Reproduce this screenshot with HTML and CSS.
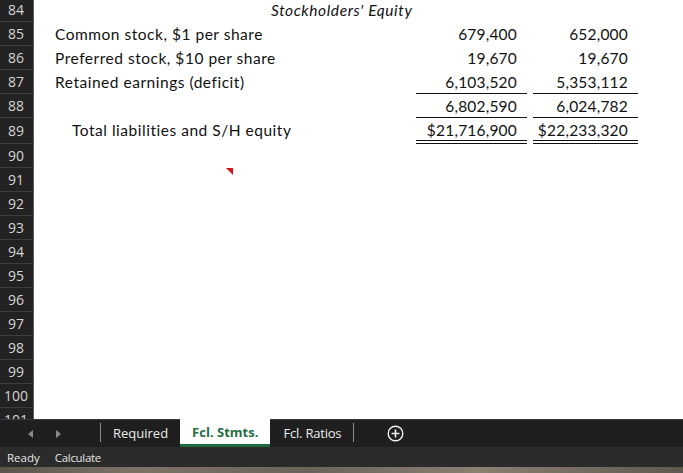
FILE: index.html
```html
<!DOCTYPE html>
<html>
<head>
<meta charset="utf-8">
<link rel="stylesheet" href="styles.css">
</head>
<body>
<div class="app">
  <div class="sheet">
    <div class="row r84"><div class="hdr">84</div><div class="c label title">Stockholders' Equity</div></div>
    <div class="row"><div class="hdr">85</div><div class="c label">Common stock, $1 per share</div><div class="c num n1">679,400</div><div class="c num n2">652,000</div></div>
    <div class="row"><div class="hdr">86</div><div class="c label">Preferred stock, $10 per share</div><div class="c num n1">19,670</div><div class="c num n2">19,670</div></div>
    <div class="row"><div class="hdr">87</div><div class="c label">Retained earnings (deficit)</div><div class="c num n1 single">6,103,520</div><div class="c num n2 single">5,353,112</div></div>
    <div class="row"><div class="hdr">88</div><div class="c label"></div><div class="c num n1 single">6,802,590</div><div class="c num n2 single">6,024,782</div></div>
    <div class="row r89"><div class="hdr">89</div><div class="c label indent">Total liabilities and S/H equity</div><div class="c num n1 double">$21,716,900</div><div class="c num n2 double">$22,233,320</div></div>
    <div class="row"><div class="hdr">90</div></div>
    <div class="row"><div class="hdr">91</div><div class="c label marked"><span class="comment"></span></div></div>
    <div class="row"><div class="hdr">92</div></div>
    <div class="row"><div class="hdr">93</div></div>
    <div class="row"><div class="hdr">94</div></div>
    <div class="row"><div class="hdr">95</div></div>
    <div class="row"><div class="hdr">96</div></div>
    <div class="row"><div class="hdr">97</div></div>
    <div class="row"><div class="hdr">98</div></div>
    <div class="row"><div class="hdr">99</div></div>
    <div class="row"><div class="hdr">100</div></div>
    <div class="row"><div class="hdr">101</div></div>
  </div>
  <div class="tabbar">
    <div class="navs">
      <svg class="arrow" width="5" height="8" viewBox="0 0 5 8"><path d="M5 0 L0 4 L5 8 Z" fill="#8a8a8a"/></svg>
      <svg class="arrow" width="5" height="8" viewBox="0 0 5 8"><path d="M0 0 L5 4 L0 8 Z" fill="#8a8a8a"/></svg>
    </div>
    <div class="sep"></div>
    <div class="tab">Required</div>
    <div class="tab active">Fcl. Stmts.</div>
    <div class="tab last">Fcl. Ratios</div>
    <div class="sep"></div>
    <svg class="add" width="17" height="17" viewBox="0 0 17 17"><circle cx="8.5" cy="8.5" r="7.3" fill="none" stroke="#f2f2f2" stroke-width="1.4"/><path d="M8.5 4.6 V12.4 M4.6 8.5 H12.4" stroke="#f2f2f2" stroke-width="1.6"/></svg>
  </div>
  <div class="status">
    <span>Ready</span>
    <span>Calculate</span>
  </div>
  <div class="desk"></div>
</div>
</body>
</html>
```
FILE: styles.css
```css
* { box-sizing: border-box; }
html, body { margin: 0; padding: 0; background: #ffffff; }
.app {
  width: 683px;
  height: 473px;
  display: flex;
  flex-direction: column;
  overflow: hidden;
}
.sheet {
  height: 419px;
  overflow: hidden;
  flex: none;
}
.row {
  display: grid;
  grid-template-columns: 34px 381px 112px 6px 105px 1fr;
  height: 24px;
  position: relative;
}
.r84 { margin-top: -2px; }
.r89 { height: 26px; }
.hdr {
  grid-column: 1;
  grid-row: 1;
  background: #222222;
  border-right: 1px solid #5c5c5c;
  border-bottom: 1px solid #3d3d3d;
  color: #d4d4d4;
  font-family: "Open Sans", "Noto Sans", sans-serif;
  font-size: 14px;
  line-height: 19px;
  display: flex;
  align-items: center;
  justify-content: center;
  padding-right: 1px;
}
.c {
  grid-row: 1;
  font-family: Lato, "Liberation Sans", sans-serif;
  font-size: 15.5px;
  line-height: 18px;
  color: #111111;
  display: flex;
  align-items: flex-end;
  padding-bottom: 2px;
  border-bottom: 1px solid transparent;
  white-space: nowrap;
}
.label { grid-column: 2; padding-left: 21px; letter-spacing: 0.52px; }
.label.indent { padding-left: 38px; }
.title { font-style: italic; padding-left: 237px; letter-spacing: 0.6px; }
.num { justify-content: flex-end; padding-right: 10px; letter-spacing: 0.2px; }
.n1 { grid-column: 3; margin-left: 1px; }
.n2 { grid-column: 5; }
.single { border-bottom: 1px solid #111111; }
.r89 .c { border-bottom: 4px solid transparent; padding-bottom: 1px; }
.r89 .double { border-bottom: 4px double #111111; }
.marked { position: relative; }
.comment {
  position: absolute;
  top: 0;
  left: 192px;
  width: 0;
  height: 0;
  border-top: 7px solid #d8141b;
  border-left: 7px solid transparent;
}
.tabbar {
  height: 28px;
  flex: none;
  background: #1f1f1f;
  border-top: 1px solid #3a3a3a;
  display: flex;
  align-items: stretch;
  font-family: "Open Sans", "Noto Sans", sans-serif;
  font-size: 13px;
  color: #ececec;
}
.navs {
  width: 100px;
  display: flex;
  align-items: center;
  padding-left: 28px;
  gap: 23px;
}
.sep {
  width: 1px;
  background: #8a8a8a;
  margin: 3px 0 5px;
}
.tab {
  display: flex;
  align-items: center;
  padding: 0 12px 2px 12px;
}
.tab.active {
  background: #ffffff;
  color: #1e6e3f;
  font-weight: 700;
  border-bottom: 3px solid #1d6b3c;
  padding: 0 12px 0 12px;
  margin-top: -1px;
}
.tab.last { padding: 0 12px 2px 13px; letter-spacing: -0.2px; }
.add { align-self: center; margin-left: 33px; margin-bottom: 1px; }
.status {
  height: 20px;
  flex: none;
  background: #2b2b2b;
  display: flex;
  align-items: center;
  gap: 15px;
  padding-left: 7px;
  font-family: "Open Sans", "Noto Sans", sans-serif;
  font-size: 11.5px;
  color: #e6e6e6;
}
.status span + span { letter-spacing: -0.3px; }
.desk {
  flex: 1;
  background: linear-gradient(90deg, #5a544d 0%, #7d7467 20%, #6a635b 45%, #8a8172 70%, #5f5850 100%);
}
```
